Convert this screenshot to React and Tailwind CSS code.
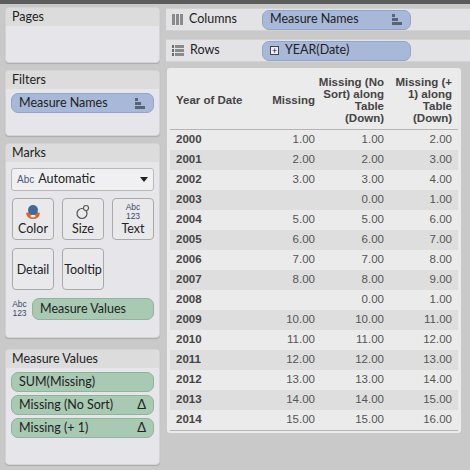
import React from 'react';

const ui = { fontFamily: 'Lato, "Open Sans", sans-serif' };
const tbl = { fontFamily: '"Liberation Sans", Arial, sans-serif' };

const SortIcon = () => (
  <svg width="12" height="11" viewBox="0 0 12 11">
    <rect x="1" y="0" width="3" height="3" fill="#5a6478" />
    <rect x="1" y="4" width="6" height="3" fill="#5a6478" />
    <rect x="1" y="8" width="10" height="3" fill="#5a6478" />
  </svg>
);

const AbcIcon = () => (
  <div className="flex flex-col items-center text-[8.5px] leading-[9px] text-[#3a4a66]" style={tbl}>
    <span>Abc</span>
    <span>123</span>
  </div>
);

const Card = ({ title, className = '', children }) => (
  <div className={`rounded-[4px] bg-[#e6e6ea] border border-[#d4d4d6] overflow-hidden shadow-[0_1px_1px_rgba(0,0,0,0.15)] ${className}`}>
    <div className="h-[18px] bg-[#dcdcdc] px-[6px] text-[12.5px] leading-[18px] text-[#222]">{title}</div>
    {children}
  </div>
);

const Pill = ({ children, color = 'blue', right, className = '' }) => (
  <div
    className={`flex items-center justify-between rounded-[7px] border px-[7px] text-[12.5px] text-[#222] ${
      color === 'blue' ? 'bg-[#a8b8d8] border-[#93a5c8]' : 'bg-[#a8c9b2] border-[#91b39c]'
    } ${className}`}
  >
    <span>{children}</span>
    {right}
  </div>
);

const MarkBtn = ({ icon, label }) => (
  <div className="w-[42px] h-[42px] rounded-[4px] border border-[#a9a9a9] bg-[#e9e9ec] flex flex-col items-center justify-center text-[12.5px] leading-[15px] text-[#222]">
    {icon && <div className="h-[19px] flex items-center justify-center">{icon}</div>}
    <span>{label}</span>
  </div>
);

const rows = [
  ['2000', '1.00', '1.00', '2.00'],
  ['2001', '2.00', '2.00', '3.00'],
  ['2002', '3.00', '3.00', '4.00'],
  ['2003', '', '0.00', '1.00'],
  ['2004', '5.00', '5.00', '6.00'],
  ['2005', '6.00', '6.00', '7.00'],
  ['2006', '7.00', '7.00', '8.00'],
  ['2007', '8.00', '8.00', '9.00'],
  ['2008', '', '0.00', '1.00'],
  ['2009', '10.00', '10.00', '11.00'],
  ['2010', '11.00', '11.00', '12.00'],
  ['2011', '12.00', '12.00', '13.00'],
  ['2012', '13.00', '13.00', '14.00'],
  ['2013', '14.00', '14.00', '15.00'],
  ['2014', '15.00', '15.00', '16.00'],
];

export default function App() {
  return (
    <div className="w-[470px] h-[470px] bg-[#c9c9c9] overflow-hidden" style={ui}>
      <div className="h-[4px] bg-[#5c5c5c]" />
      <div className="flex gap-[6px] pl-[5px] pt-[3px]">
        {/* left column */}
        <div className="w-[155px] flex flex-col gap-[7px]">
          <Card title="Pages" className="h-[56px]" />
          <Card title="Filters" className="h-[66px]">
            <div className="px-[5px] pt-[4px]">
              <Pill className="h-[20px]" right={<SortIcon />}>Measure Names</Pill>
            </div>
          </Card>
          <Card title="Marks" className="h-[195px]">
            <div className="px-[5px] pt-[6px]">
              <div className="h-[23px] flex items-center justify-between bg-[#f0f0f2] border border-[#b9b9b9] rounded-[3px] px-[5px] text-[12.5px] text-[#222]">
                <span className="flex items-center gap-[4px]">
                  <span className="text-[10px] text-[#4a5a78]" style={tbl}>Abc</span>Automatic
                </span>
                <svg width="8" height="5" viewBox="0 0 8 5"><path d="M0 0h8L4 5z" fill="#222" /></svg>
              </div>
              <div className="grid grid-cols-3 gap-x-[8px] gap-y-[8px] mt-[7px] pl-[1px]">
                <MarkBtn
                  label="Color"
                  icon={
                    <svg width="16" height="16" viewBox="0 0 16 16">
                      <path d="M1 9 Q8 6 15 9 Q14 15 8 15 Q2 15 1 9z" fill="#d8652a" />
                      <path d="M5 12 Q8 9 11 12 Q8 15 5 12z" fill="#f0f0f0" />
                      <circle cx="8" cy="6" r="5" fill="#3f6a9a" />
                    </svg>
                  }
                />
                <MarkBtn
                  label="Size"
                  icon={
                    <svg width="16" height="16" viewBox="0 0 16 16">
                      <circle cx="7" cy="9.5" r="5" fill="none" stroke="#555" strokeWidth="1.2" />
                      <circle cx="11" cy="4" r="2.5" fill="#eee" stroke="#555" strokeWidth="1.1" />
                    </svg>
                  }
                />
                <MarkBtn label="Text" icon={<AbcIcon />} />
                <MarkBtn label="Detail" />
                <MarkBtn label="Tooltip" />
              </div>
              <div className="flex items-center gap-[4px] mt-[8px]">
                <div className="w-[17px] shrink-0 flex justify-center"><AbcIcon /></div>
                <Pill color="green" className="flex-1 h-[22px]">Measure Values</Pill>
              </div>
            </div>
          </Card>
          <Card title="Measure Values" className="h-[116px] mt-[4px]">
            <div className="px-[5px] pt-[4px] flex flex-col gap-[3px]">
              <Pill color="green" className="h-[20px]">SUM(Missing)</Pill>
              <Pill color="green" className="h-[20px]" right={<span className="text-[13px]">Δ</span>}>Missing (No Sort)</Pill>
              <Pill color="green" className="h-[20px]" right={<span className="text-[13px]">Δ</span>}>Missing (+ 1)</Pill>
            </div>
          </Card>
        </div>

        {/* right column */}
        <div className="flex-1 flex flex-col gap-[8px] pt-[1px]">
          <div className="h-[23px] bg-[#e3e3e5] border-y border-[#d2d2d2] flex items-center">
            <div className="w-[96px] flex items-center gap-[6px] pl-[6px] text-[12.5px] text-[#222]">
              <svg width="11" height="11" viewBox="0 0 11 11" fill="#8a8a8a">
                <rect x="0" y="0" width="3" height="11" />
                <rect x="4" y="0" width="3" height="11" />
                <rect x="8" y="0" width="3" height="11" />
              </svg>
              Columns
            </div>
            <Pill className="w-[149px] h-[20px]" right={<SortIcon />}>Measure Names</Pill>
          </div>
          <div className="h-[23px] bg-[#e3e3e5] border-y border-[#d2d2d2] flex items-center">
            <div className="w-[96px] flex items-center gap-[6px] pl-[6px] text-[12.5px] text-[#222]">
              <svg width="12" height="11" viewBox="0 0 12 11" fill="#8a8a8a">
                <rect x="0" y="0" width="2" height="3" fill="#6a6a6a" />
                <rect x="3" y="0" width="9" height="3" />
                <rect x="0" y="4" width="2" height="3" fill="#6a6a6a" />
                <rect x="3" y="4" width="9" height="3" />
                <rect x="0" y="8" width="2" height="3" fill="#6a6a6a" />
                <rect x="3" y="8" width="9" height="3" />
              </svg>
              Rows
            </div>
            <Pill className="w-[149px] h-[20px] justify-start">
              <span className="flex items-center gap-[6px]">
                <span className="w-[9px] h-[9px] border border-[#444] bg-[#eef] flex items-center justify-center text-[9px] leading-none">+</span>
                YEAR(Date)
              </span>
            </Pill>
          </div>
          <div className="w-[294px] h-[365px] ml-[1px] mt-[-2px] bg-[#ebebeb] rounded-[3px] px-[3px] text-[11.5px]" style={tbl}>
            <div className="flex items-end h-[62px] pb-[5px] border-b border-[#b5b5b5] font-bold text-[#444] leading-[12px]">
              <div className="w-[80px] pl-[6px] pb-[18px]">Year of Date</div>
              <div className="w-[65px] text-right pb-[18px]">Missing</div>
              <div className="w-[69px] flex justify-end"><div className="w-[66px] text-right">Missing (No Sort) along Table (Down)</div></div>
              <div className="w-[68px] flex justify-end"><div className="w-[62px] text-right">Missing (+ 1) along Table (Down)</div></div>
            </div>
            {rows.map((r, i) => (
              <div key={r[0]} className={`flex h-[20px] items-center text-[#555] ${i % 2 ? 'bg-[#dedede]' : ''}`}>
                <div className="w-[80px] pl-[6px] font-bold text-[#444]">{r[0]}</div>
                <div className="w-[65px] text-right">{r[1]}</div>
                <div className="w-[69px] text-right">{r[2]}</div>
                <div className="w-[68px] text-right">{r[3]}</div>
              </div>
            ))}
            <div className="border-t border-[#b5b5b5]" />
          </div>
        </div>
      </div>
    </div>
  );
}
